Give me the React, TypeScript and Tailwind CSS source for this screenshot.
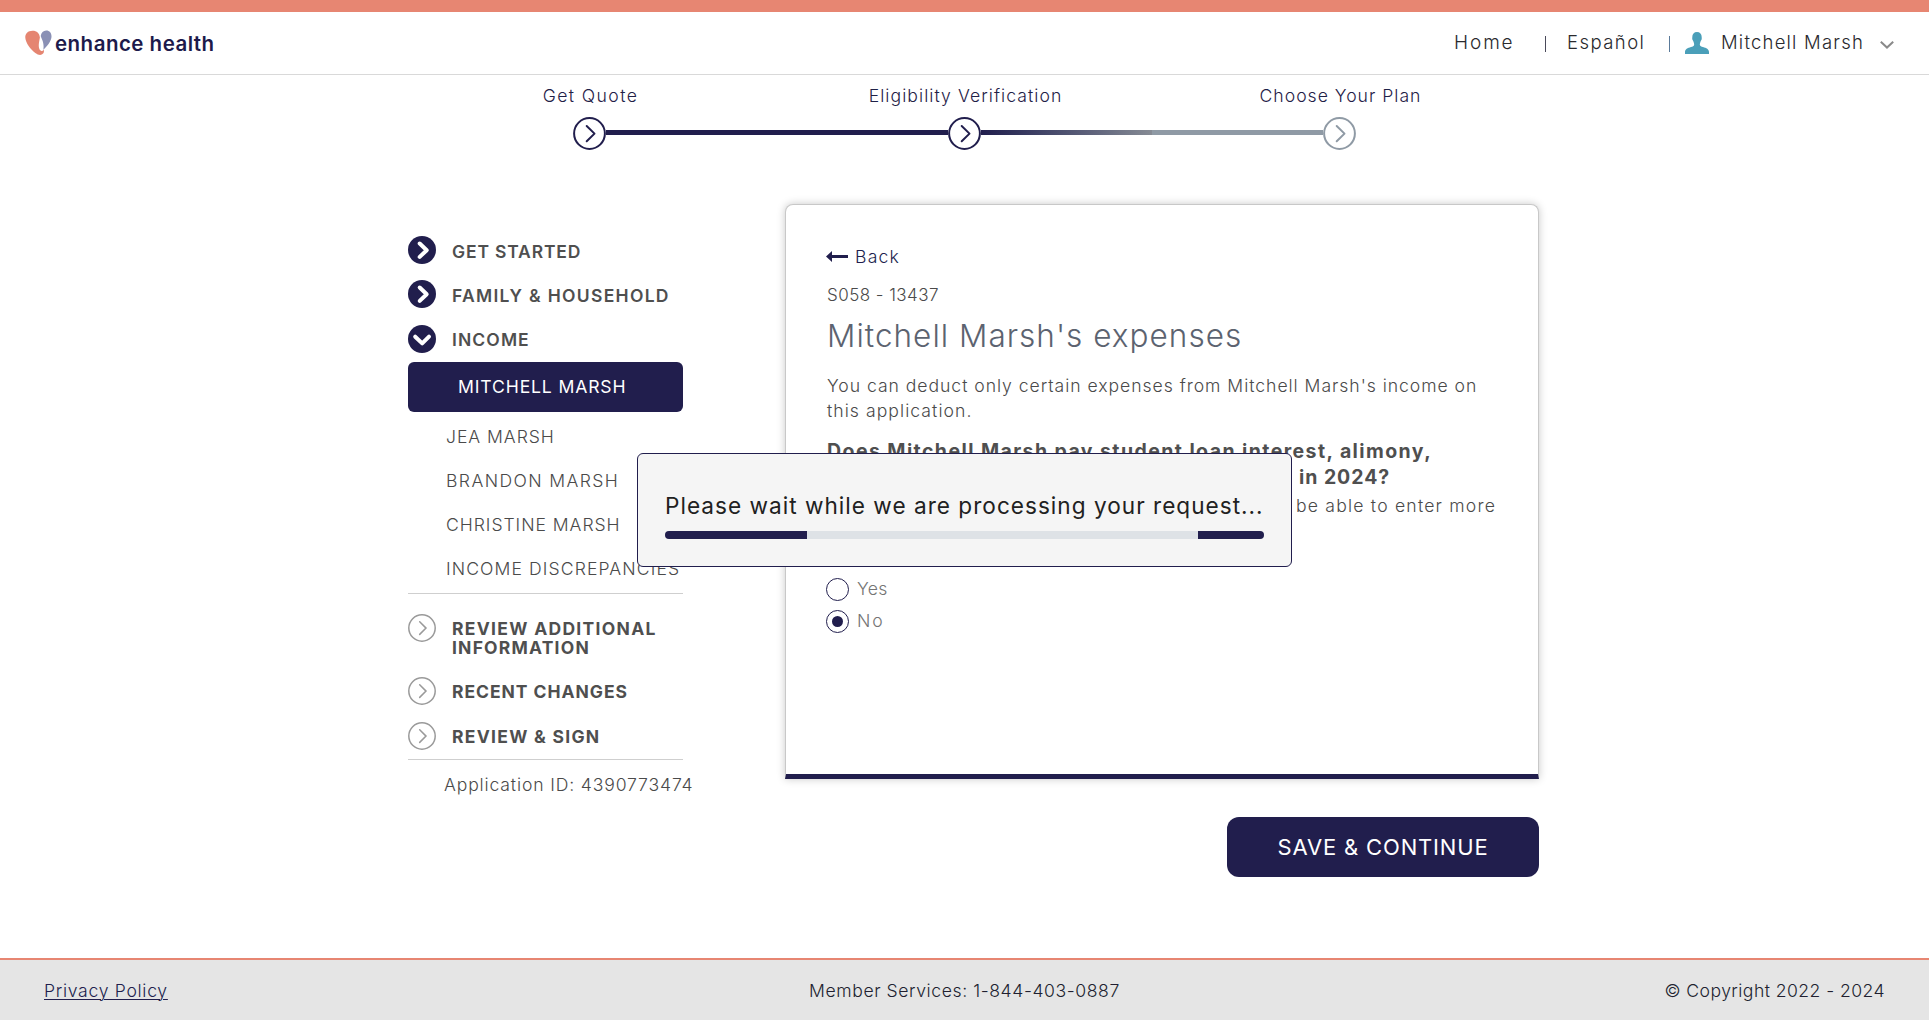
import React from "react";

const sans = "font-['Inter','Liberation_Sans',sans-serif]";

function HeartLogo() {
  return (
    <svg width="27" height="26" viewBox="0 0 27 26" className="shrink-0">
      <path
        d="M7.500 .8C3 .8 0 3.600 .3 7.800c.4 5.200 5.200 11.600 10 15.200 3 2.200 6 2.600 7.800.6 1-1.100 1-2.700.6-4.100-.6 1.300-1.600 1.800-2.700 1.300-2-.9-2.600-4.300-2-8.300.3-2 .7-3.600.9-5.100C14.300 3.300 12 .8 7.500 .8z"
        fill="#e58571"
      />
      <path
        d="M21.200 .4c-3 0-4.900 2.200-5.500 5.600.5 2.100 2 4.200 2.500 6.900.5 2.600.5 5 .1 6.800 3.600-3.300 7.700-7.900 8.200-12.700C26.800 3 24.600 .4 21.200 .4z"
        fill="#8a90b5"
      />
    </svg>
  );
}

function PersonIcon() {
  return (
    <svg width="24" height="22" viewBox="0 0 24 22" className="shrink-0" fill="#4a9fb9">
      <path d="M12 0c-3 0-4.700 2-4.700 5 0 1.200-.2 1.600.1 2.600.2.900.9 1.300 1.200 2.300.3 1.200.7 1.700.5 3-.2 1.100-1.400 1.600-3.100 2.200C2.600 16.200 0 17.200 0 20.200V22h24v-1.800c0-3-2.600-4-6-5.100-1.700-.6-2.900-1.100-3.100-2.200-.2-1.300.2-1.800.5-3 .3-1 1-1.400 1.200-2.300.3-1 .1-1.400.1-2.600 0-3-1.700-5-4.700-5z" />
    </svg>
  );
}

function StepCircle({ color }: { color: string }) {
  return (
    <svg width="33" height="33" viewBox="0 0 33 33" className="shrink-0" fill="none" stroke={color}>
      <circle cx="16.500" cy="16.500" r="15.400" strokeWidth="2" fill="#fff" />
      <path d="M13.700 9l7.800 7.600-7.800 7.700" strokeWidth="2" strokeLinecap="round" strokeLinejoin="round" />
    </svg>
  );
}

function NavIcon({ kind, className = "" }: { kind: "right" | "down" | "todo"; className?: string }) {
  return (
    <svg width="28" height="28" viewBox="0 0 28 28" className={`shrink-0 ${className}`} fill="none">
      {kind === "todo" ? (
        <>
          <circle cx="14" cy="14" r="13.200" stroke="#9a9a9a" strokeWidth="1.500" />
          <path d="M11.700 7.800l6.300 6.300-6.300 6.300" stroke="#9a9a9a" strokeWidth="1.500" strokeLinecap="round" />
        </>
      ) : (
        <>
          <circle cx="14" cy="14" r="14" fill="#211e4d" />
          <path
            d={kind === "right" ? "M11.700 7.500l7 6.700-7 6.700" : "M7.200 11.700l7 6.700 6.800-6.700"}
            stroke="#fff"
            strokeWidth="4"
            strokeLinecap="round"
            strokeLinejoin="round"
          />
        </>
      )}
    </svg>
  );
}

function Radio({ checked = false }: { checked?: boolean }) {
  return (
    <span className="-ml-px flex size-[23px] shrink-0 items-center justify-center rounded-full border border-[#211e4d]">
      {checked && <span className="size-[11px] rounded-full bg-[#211e4d]" />}
    </span>
  );
}

function Header() {
  return (
    <header className="flex h-[75px] shrink-0 items-center border-t-[12px] border-b border-t-[#e78672] border-b-[#d9d9d9] pl-[25px] text-[18px] font-light text-[#2a2a2e]">
      <HeartLogo />
      <span className="ml-[3px] pt-[2px] text-[20.5px] font-semibold tracking-[0.48px] text-[#1d1a4b]">enhance health</span>
      <nav className="ml-auto flex items-center">
        <div className="w-[91px] text-[19px] tracking-[1.9px]">Home</div>
        <div className="mt-[2px] h-4 w-px bg-[#4a4a5a]" />
        <div className="ml-[21px] w-[102px] text-[18.5px] tracking-[1.45px]">Español</div>
        <div className="mt-[2px] h-4 w-px bg-[#5a7a9a]" />
        <div className="ml-[15px] flex items-center">
          <PersonIcon />
          <div className="ml-[12px] w-[159px] text-[18.5px] tracking-[1.21px]">Mitchell Marsh</div>
          <svg width="14" height="8" viewBox="0 0 14 8" className="mt-[3px] mr-[35px]" fill="none" stroke="#8a8a8a" strokeWidth="2">
            <path d="M.8 .8L7 6.600 13.200 .8" />
          </svg>
        </div>
      </nav>
    </header>
  );
}

function Steps() {
  return (
    <div className="shrink-0">
      <div className="ml-[403px] grid h-[42px] w-[1125px] grid-cols-3 items-center pt-px text-center text-[17.6px] font-light whitespace-nowrap text-[#1f2147]">
        <div className="tracking-[1.4px]">Get Quote</div>
        <div className="tracking-[1.05px]">Eligibility Verification</div>
        <div className="tracking-[1px]">Choose Your Plan</div>
      </div>
      <div className="ml-[573px] flex h-[33px] w-[783px] items-center">
        <StepCircle color="#211e4d" />
        <div className="-mt-[3px] h-[5px] w-[342px] bg-[#211e4d]" />
        <StepCircle color="#211e4d" />
        <div className="-mt-[3px] h-[5px] w-[171px] bg-gradient-to-r from-[#211e4d] to-[#868b94]" />
        <div className="-mt-[3px] h-[5px] w-[171px] bg-[#8f9aa5]" />
        <StepCircle color="#8f9aa5" />
      </div>
    </div>
  );
}

function Sidebar() {
  return (
    <aside className="w-[275px] shrink-0 pt-[80px] text-[17.6px] font-light whitespace-nowrap text-[#4a4a4a]">
      <div className="text-[17.5px] font-semibold text-[#4f4f4f]">
        <div className="flex h-[44px] items-center">
          <NavIcon kind="right" className="mb-[5px]" />
          <span className="ml-[16px] tracking-[0.84px]">GET STARTED</span>
        </div>
        <div className="flex h-[44px] items-center">
          <NavIcon kind="right" className="mb-[4px]" />
          <span className="ml-[16px] tracking-[1.3px]">FAMILY &amp; HOUSEHOLD</span>
        </div>
        <div className="flex h-[44px] items-center">
          <NavIcon kind="down" className="mb-[3px]" />
          <span className="ml-[16px] tracking-[1.1px]">INCOME</span>
        </div>
      </div>
      <div className="flex h-[50px] items-center rounded-[6px] bg-[#211e4d] pt-px pl-[50px] font-normal tracking-[0.85px] text-white">
        MITCHELL MARSH
      </div>
      <ul className="border-b border-[#cfcfcf] pt-[3px] pb-[2px] pl-[38px] leading-[44px]">
        <li className="tracking-[0.95px]">JEA MARSH</li>
        <li className="tracking-[1.4px]">BRANDON MARSH</li>
        <li className="tracking-[0.95px]">CHRISTINE MARSH</li>
        <li className="tracking-[1.1px]">INCOME DISCREPANCIES</li>
      </ul>
      <div className="border-b border-[#cfcfcf] pt-[20px] text-[17.5px] leading-[19px] font-bold text-[#4f4f4f]">
        <div className="flex h-[63px] items-start">
          <NavIcon kind="todo" />
          <div className="pt-[5px] pl-[16px]">
            <div className="tracking-[1.3px]">REVIEW ADDITIONAL</div>
            <div className="tracking-[1.2px]">INFORMATION</div>
          </div>
        </div>
        <div className="flex h-[45px] items-start">
          <NavIcon kind="todo" />
          <div className="pt-[5px] pl-[16px] tracking-[0.96px]">RECENT CHANGES</div>
        </div>
        <div className="flex h-[37px] items-start">
          <NavIcon kind="todo" />
          <div className="pt-[5px] pl-[16px] tracking-[1.28px]">REVIEW &amp; SIGN</div>
        </div>
      </div>
      <div className="pl-[36px] leading-[50px] tracking-[0.85px]">Application ID: 4390773474</div>
    </aside>
  );
}

function ExpensesCard() {
  return (
    <section className="h-[575px] rounded-t-[8px] border border-b-[5px] border-[#c8c8c8] border-b-[#211e4d] bg-white px-[41px] pt-[34px] text-[17.6px] leading-[25px] font-light whitespace-nowrap text-[#4a4a4a] shadow-[0_0_8px_rgba(0,0,0,0.22)]">
      <div className="flex h-[34px] items-center text-[#211e4d]">
        <svg width="22" height="11" viewBox="0 0 22 11" className="-ml-px" fill="#211e4d">
          <path d="M0 5.500L6 0v4H22v3H6v4z" />
        </svg>
        <span className="ml-[7px] tracking-[1.2px]">Back</span>
      </div>
      <div className="text-[17px] leading-[44px] tracking-[0.45px]">S058 - 13437</div>
      <h1 className="text-[31.5px] leading-[38px] tracking-[1.02px] text-[#5c6370]">Mitchell Marsh's expenses</h1>
      <div className="mt-[18px]">
        <div className="tracking-[0.96px]">You can deduct only certain expenses from Mitchell Marsh's income on</div>
        <div className="tracking-[1.05px]">this application.</div>
      </div>
      <div className="mt-[15px] text-[19.5px] leading-[26px] font-bold text-[#4f4f4f]">
        <div className="tracking-[1.42px]">Does Mitchell Marsh pay student loan interest, alimony,</div>
        <div className="pl-[472px] tracking-[0.95px]">in 2024?</div>
      </div>
      <div className="mt-[3px] pl-[469px] tracking-[1.2px]">be able to enter more</div>
      <div className="mt-[55px] leading-[32px] text-[#757575]">
        <div className="flex h-[32px] items-center">
          <Radio />
          <span className="ml-[8px] tracking-[0.3px]">Yes</span>
        </div>
        <div className="flex h-[32px] items-center">
          <Radio checked />
          <span className="ml-[8px] tracking-[2px]">No</span>
        </div>
      </div>
    </section>
  );
}

function ProcessingModal() {
  return (
    <div
      role="dialog"
      className="absolute top-[453px] left-[637px] h-[114px] w-[655px] rounded-[6px] border border-[#211e4d] bg-[#f5f5f5] px-[27px] pt-[36px] text-[#212121]"
    >
      <div className="text-[22.6px] leading-[32px] tracking-[1.01px] whitespace-nowrap">
        Please wait while we are processing your request...
      </div>
      <div className="mt-[9px] flex h-[8px] justify-between overflow-hidden rounded-[4px] bg-[#dee2e6]">
        <div className="w-[142px] bg-[#211e4d]" />
        <div className="w-[66px] bg-[#211e4d]" />
      </div>
    </div>
  );
}

export default function App() {
  return (
    <div className={`relative flex h-[1020px] w-[1929px] flex-col overflow-hidden bg-white ${sans}`}>
      <Header />
      <Steps />
      <main className="ml-[408px] flex w-[1131px]">
        <Sidebar />
        <div className="ml-[102px] flex w-[754px] flex-col pt-[54px]">
          <ExpensesCard />
          <button className="mt-[38px] h-[60px] w-[312px] self-end rounded-[12px] bg-[#211e4d] text-[22px] tracking-[0.84px] text-white">
            SAVE &amp; CONTINUE
          </button>
        </div>
      </main>
      <footer className="mt-auto grid h-[62px] shrink-0 grid-cols-3 items-center border-t-2 border-[#e78672] bg-[#e5e5e5] px-[44px] pt-[2px] text-[17.6px] font-light text-[#211f30]">
        <a className="tracking-[0.7px] text-[#211e4d] underline decoration-1 underline-offset-2">Privacy Policy</a>
        <div className="text-center tracking-[0.58px]">Member Services: 1-844-403-0887</div>
        <div className="text-right tracking-[0.44px]">© Copyright 2022 - 2024</div>
      </footer>
      <ProcessingModal />
    </div>
  );
}
